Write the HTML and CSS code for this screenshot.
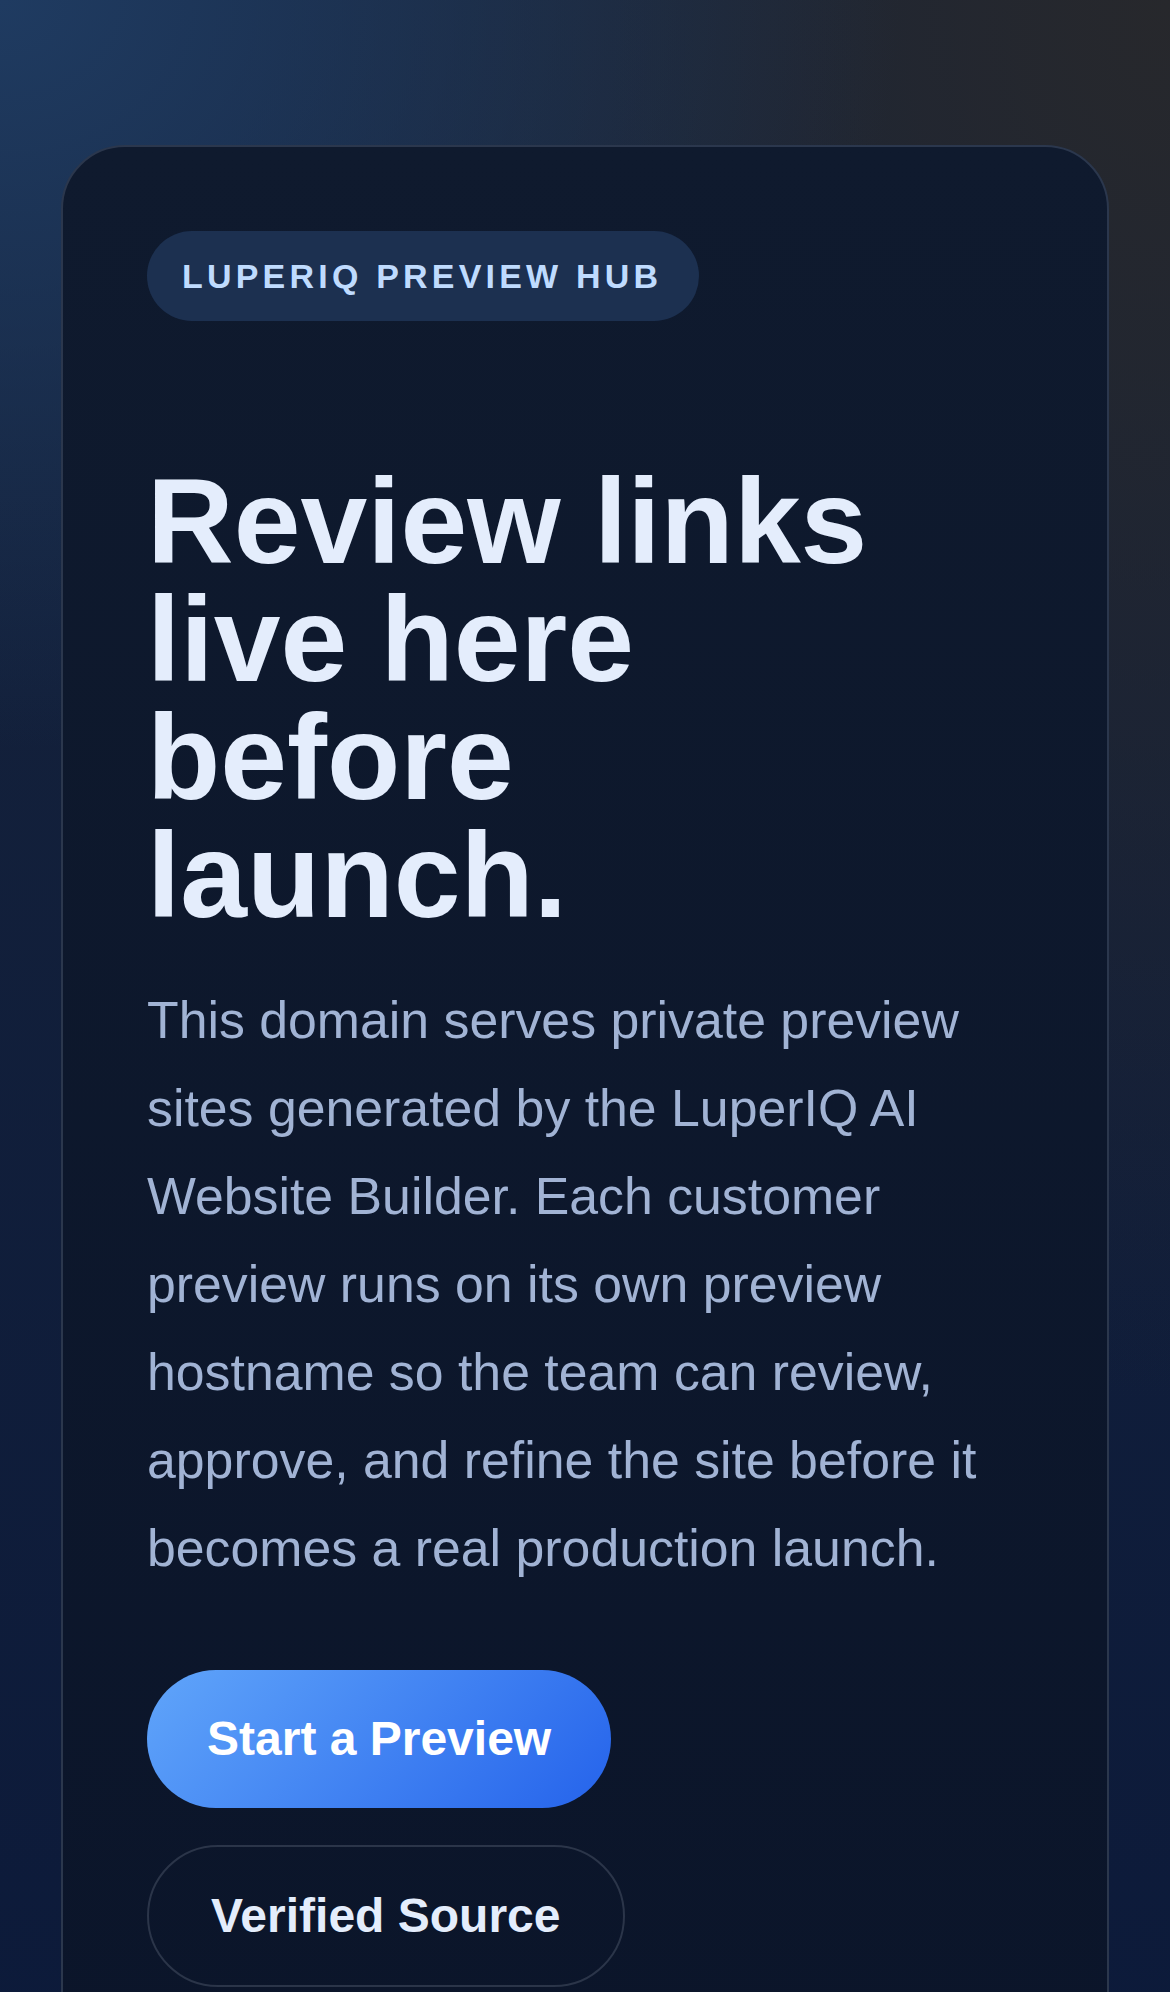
FILE: index.html
```html
<!DOCTYPE html>
<html lang="en">
<head>
    <meta charset="UTF-8">
    <meta name="viewport" content="width=device-width, initial-scale=1.0">
    <title>LuperIQ Preview Hub</title>
    <link rel="stylesheet" href="styles.css">
</head>
<body>
    <main class="page">
        <section class="card">
            <div class="badge">LUPERIQ PREVIEW HUB</div>
            <h1 class="title">Review links live here before launch.</h1>
            <p class="lead">This domain serves private preview sites generated by the LuperIQ AI Website Builder. Each customer preview runs on its own preview hostname so the team can review, approve, and refine the site before it becomes a real production launch.</p>
            <div class="actions">
                <a class="btn btn-primary" href="#">Start a Preview</a>
                <a class="btn btn-ghost" href="#">Verified Source</a>
            </div>
        </section>
    </main>
</body>
</html>
```

FILE: styles.css
```css
body {
    margin: 0;
    padding: 0;
    min-height: 100vh;
    font-family: "Liberation Sans", Arial, sans-serif;
    background:
        radial-gradient(ellipse 900px 750px at 0 0, #1f3b61 0%, rgba(31, 59, 97, 0) 100%),
        radial-gradient(ellipse 950px 1400px at 100% 0, #27282c 0%, rgba(39, 40, 44, 0) 100%),
        linear-gradient(180deg, #16233b 0%, #0c1a3a 100%);
    background-color: #0c1a3a;
}
.page {
    padding: 145px 61px 0;
}
.card {
    border: 2px solid #2b374d;
    border-radius: 64px;
    padding: 84px 84px 120px;
    background: linear-gradient(180deg, #0f1a2e 0%, #0b152a 100%);
}
.badge {
    display: inline-block;
    padding: 25px 37px 25px 35px;
    border-radius: 45px;
    background: #1c3050;
    color: #bfdbfe;
    font-size: 34px;
    font-weight: bold;
    line-height: 40px;
    letter-spacing: 4.2px;
}
.title {
    margin: 141px 0 0;
    max-width: 800px;
    color: #e4edfc;
    font-size: 120px;
    line-height: 118px;
    font-weight: bold;
}
.lead {
    margin: 42px 0 0;
    color: #a1b3d4;
    font-size: 51.8px;
    line-height: 88px;
}
.actions {
    display: flex;
    flex-wrap: wrap;
    gap: 37px;
    margin-top: 78px;
}
.btn {
    display: inline-block;
    padding: 42px 60px;
    border-radius: 80px;
    font-size: 48px;
    font-weight: bold;
    line-height: 54px;
    text-decoration: none;
}
.btn-primary {
    color: #ffffff;
    background: linear-gradient(135deg, #60a5fa 0%, #2563eb 100%);
}
.btn-ghost {
    padding: 42px 63px 42px 62px;
    color: #e4edfc;
    border: 2px solid #2b3549;
    background: transparent;
}
```
